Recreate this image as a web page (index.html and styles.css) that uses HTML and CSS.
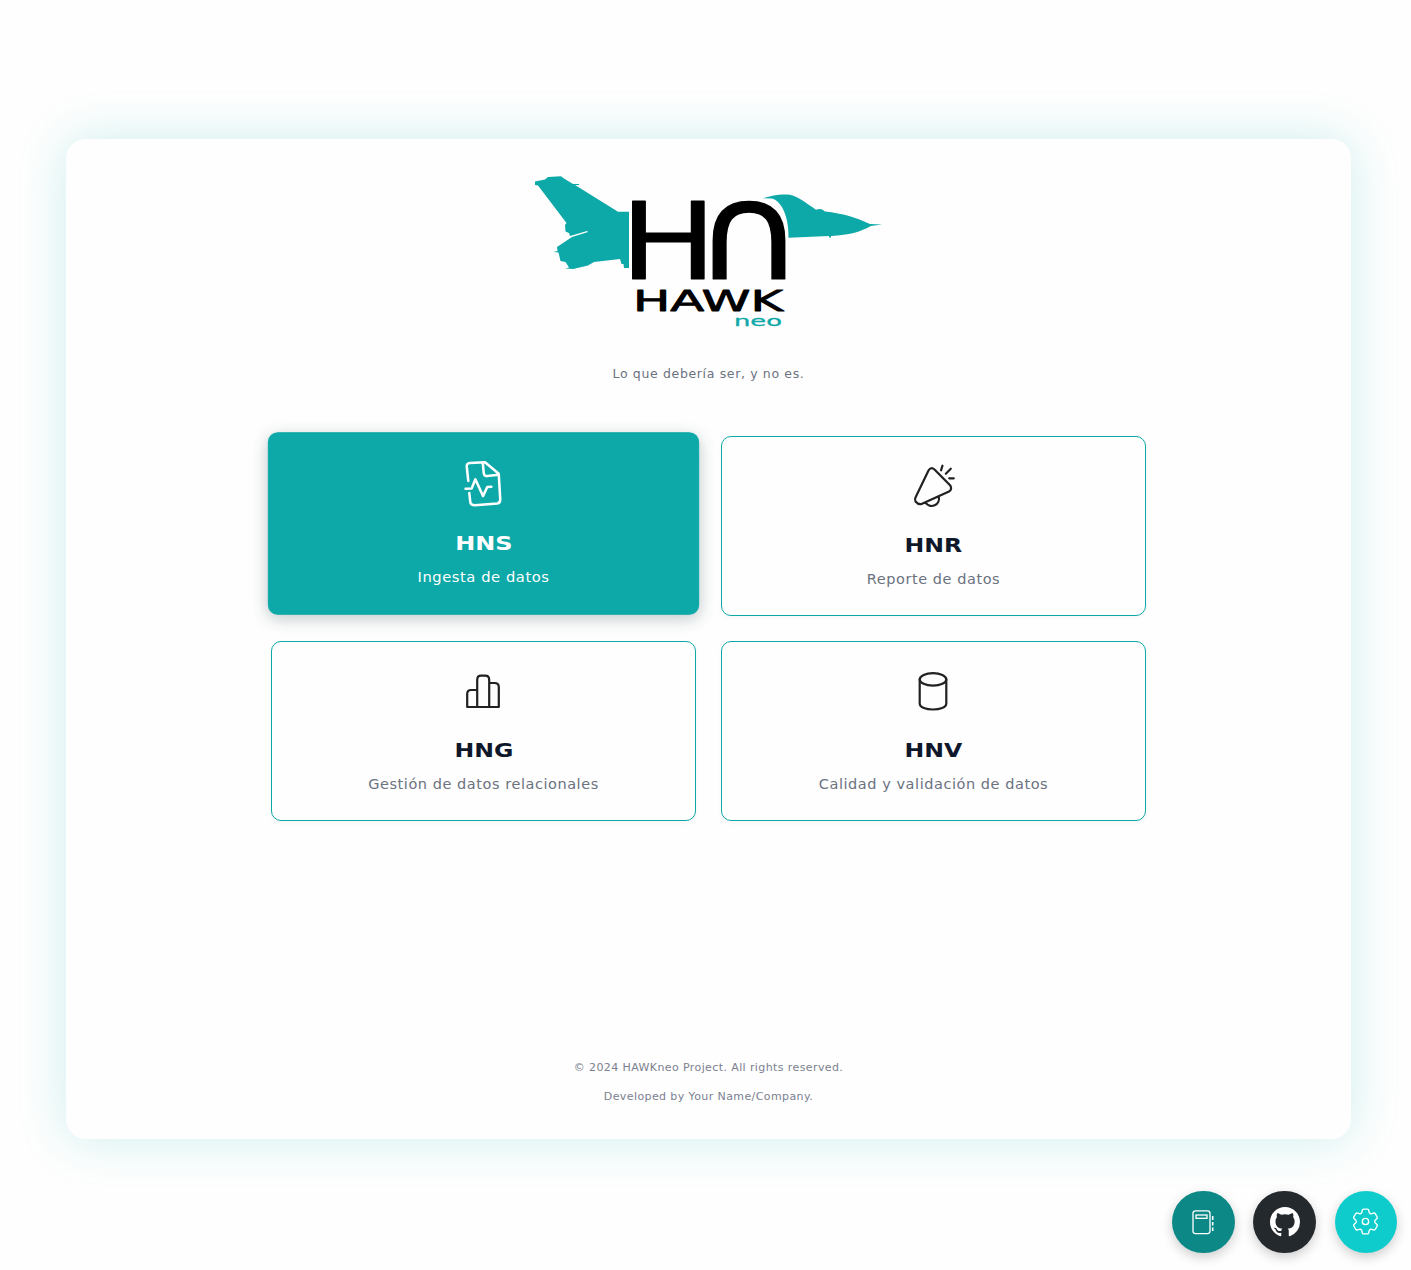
FILE: index.html
```html
<!DOCTYPE html>
<html lang="es">
<head>
<meta charset="utf-8">
<title>HAWKneo</title>
<link rel="stylesheet" href="styles.css">
</head>
<body>
<main class="panel">
  <svg class="logo" viewBox="525 165 367 170" role="img" aria-label="HAWK neo">
    <g fill="#0da8a8">
      <path d="M535 181.5 545 179.500 548 177 561 176.300 564 178.500 573 184 579 184 579 185 575 185 618 211.700H629V268H624L623.500 264H621.500L620 259 594 262 588 265.500 573 269 565 268.500 569 267.500 565.500 262 560.500 261 558.500 252.500 553.500 252 557.500 251 557 247 572 237 588 232 587 231 570 236 569 233 565.500 231.500 565 225 566.500 223 538 185.500 535 185Z"/>
      <path d="M763 198.200C773 195 781 193.700 790 194.800C799 197 808 204.500 816 209.700C819 208.500 822 208.500 825 211.500C843 213.500 856 217.500 870 224L882 224.500 871 226C859 232.500 850 234.500 831 236V237.500H829V236L788.500 237.700C789 222 784 202 772 198.500Z"/>
    </g>
    <text class="mark" transform="translate(620 279) scale(1.190 .985)">H</text>
    <text class="mark" transform="translate(694 279) scale(1.400 1.240)">∩</text>
    <text class="word" x="633" y="311" textLength="150" lengthAdjust="spacingAndGlyphs">HAWK</text>
    <text class="neo" x="734" y="325.500" textLength="48" lengthAdjust="spacingAndGlyphs">neo</text>
  </svg>
  <p class="tagline"><span>Lo que debería ser, y no es.</span></p>
  <nav class="modules">
    <a class="module active">
      <svg class="icon" viewBox="0 0 48 48"><path d="M9.500 21 8 7Q7.500 4 11 3.500L26 2.700 39.500 14 41 39Q41 43 38 43.300L16 45Q12 45 11.500 42L10.500 33M23.800 3 24.700 13Q25 16.500 28 16.300L39.500 15M6.800 28.800 12.800 28.500 16.500 19.500 24 36 28.200 27 32.200 26.800"/></svg>
      <h2>HNS</h2><p>Ingesta de datos</p>
    </a>
    <a class="module">
      <svg class="icon" viewBox="0 0 48 48"><path d="M19.500 8.500Q22 4.500 25.500 7.500L41.300 23.500Q43.500 27.500 40 29.500L12.500 42Q9.500 43 6.500 39.500 5.500 37.500 6.500 35.500ZM16.500 40.700A7.400 7.400 0 0 0 29.800 34.700M33.500 3.700 32 8.300M41.800 6.700 36.800 11.700M40.200 16.300H44.800"/></svg>
      <h2>HNR</h2><p>Reporte de datos</p>
    </a>
    <a class="module">
      <svg class="icon" viewBox="0 0 48 48"><path d="M18.200 40H8.200V27Q8.200 23 12 23H18.200M18.200 40V13Q18.200 8.700 22 8.700H26.200Q30.200 8.700 30.200 13V40M30.200 16H35.500Q39.800 16 39.800 20V40H18.200"/></svg>
      <h2>HNG</h2><p>Gestión de datos relacionales</p>
    </a>
    <a class="module">
      <svg class="icon" viewBox="0 0 48 48"><ellipse cx="24" cy="12.400" rx="13.300" ry="6.300"/><path d="M10.700 12.400V36.500C10.700 44.500 37.300 44.500 37.300 36.500V12.400"/></svg>
      <h2>HNV</h2><p>Calidad y validación de datos</p>
    </a>
  </nav>
  <footer class="footer">
    <p>© 2024 HAWKneo Project. All rights reserved.</p>
    <p>Developed by Your Name/Company.</p>
  </footer>
</main>
<div class="actions">
  <a class="action docs" aria-label="Docs"><svg width="28" height="28" viewBox="0 0 28 28" fill="none" stroke="#fff" stroke-width="1.300"><rect x="4" y="2.800" width="17" height="22.800" rx="2.500"/><rect x="7" y="7" width="11" height="3.300"/><path stroke-width="1.600" d="M23.700 8V12M23.700 14V17.500M23.700 19.500V23"/></svg></a>
  <a class="action github" aria-label="GitHub"><svg width="30" height="30" viewBox="0 0 16 16" fill="#fff"><path d="M8 0C3.580 0 0 3.580 0 8c0 3.540 2.290 6.530 5.470 7.590.4.070.55-.17.55-.38 0-.19-.01-.82-.01-1.490-2.010.37-2.530-.49-2.690-.94-.09-.23-.48-.94-.82-1.130-.28-.15-.68-.52-.01-.53.630-.01 1.080.58 1.230.82.720 1.210 1.870.87 2.330.66.070-.52.280-.87.510-1.070-1.780-.2-3.640-.89-3.640-3.950 0-.87.310-1.590.82-2.150-.08-.2-.36-1.020.08-2.120 0 0 .67-.21 2.200.82.640-.18 1.320-.27 2-.27s1.360.09 2 .27c1.530-1.040 2.200-.82 2.200-.82.440 1.100.16 1.920.08 2.120.510.56.82 1.270.82 2.150 0 3.070-1.870 3.750-3.650 3.950.290.250.54.73.54 1.480 0 1.070-.01 1.930-.01 2.200 0 .21.150.46.55.38A8.010 8.010 0 0 0 16 8c0-4.420-3.580-8-8-8Z"/></svg></a>
  <a class="action settings" aria-label="Settings"><svg width="33" height="33" viewBox="0 0 24 24" fill="none" stroke="#fff" stroke-width="1"><path d="M9.594 3.940c.09-.542.56-.94 1.110-.94h2.593c.55 0 1.020.398 1.110.94l.213 1.281c.063.374.313.686.645.87.074.04.147.083.22.127.325.196.72.257 1.075.124l1.217-.456a1.125 1.125 0 0 1 1.370.49l1.296 2.247a1.125 1.125 0 0 1-.26 1.431l-1.003.827c-.293.241-.438.613-.43.992a7.723 7.723 0 0 1 0 .255c-.008.378.137.75.43.991l1.004.827c.424.35.534.955.26 1.430l-1.298 2.247a1.125 1.125 0 0 1-1.369.491l-1.217-.456c-.355-.133-.75-.072-1.076.124a6.470 6.470 0 0 1-.22.128c-.331.183-.581.495-.644.869l-.213 1.281c-.09.543-.56.94-1.110.94h-2.594c-.55 0-1.019-.398-1.110-.94l-.213-1.281c-.062-.374-.312-.686-.644-.87a6.520 6.520 0 0 1-.22-.127c-.325-.196-.72-.257-1.076-.124l-1.217.456a1.125 1.125 0 0 1-1.369-.49l-1.297-2.247a1.125 1.125 0 0 1 .26-1.431l1.004-.827c.292-.24.437-.613.43-.991a6.932 6.932 0 0 1 0-.255c.007-.38-.138-.751-.43-.992l-1.004-.827a1.125 1.125 0 0 1-.26-1.430l1.297-2.247a1.125 1.125 0 0 1 1.370-.491l1.216.456c.356.133.751.072 1.076-.124.072-.044.146-.086.22-.128.332-.183.582-.495.644-.869l.214-1.280Z"/><circle cx="12" cy="12" r="2.300"/></svg></a>
</div>
</body>
</html>
```
FILE: styles.css
```css
* { box-sizing: border-box; }
body {
  margin: 0;
  min-height: 1270px;
  padding: 139px 60px 0 66px;
  background: #fefefe;
  font-family: "DejaVu Sans", sans-serif;
}
h2, p { margin: 0; }
.panel {
  display: flex;
  flex-direction: column;
  align-items: center;
  height: 1000px;
  padding: 26px 0 35px;
  border-radius: 20px;
  background: #fefefe;
  box-shadow: 0 0 50px rgba(13, 168, 168, .2);
}
.logo { width: 367px; height: 170px; flex: none; }
.mark { font: 108px "DejaVu Sans", sans-serif; stroke: #000; stroke-width: 1; stroke-linejoin: round; }
.word { font: 28px "DejaVu Sans", sans-serif; stroke: #000; stroke-width: .8; stroke-linejoin: round; }
.neo { font: 14px "DejaVu Sans", sans-serif; fill: #0da8a8; stroke: #0da8a8; stroke-width: .3; }
.tagline { margin-top: 29px; font-size: 12.500px; line-height: 20px; letter-spacing: .65px; color: #6b7280; }
.modules {
  display: grid;
  grid-template-columns: repeat(2, 425px);
  grid-auto-rows: 180px;
  gap: 25px;
  margin-top: 52px;
}
.module {
  display: flex;
  flex-direction: column;
  align-items: center;
  padding-top: 25px;
  border: 1px solid #0da8a8;
  border-radius: 10px;
  background: #fefefe;
  box-shadow: 0 2px 5px rgba(0, 0, 0, .03);
  color: #0f172a;
}
.icon { width: 48px; height: 48px; margin-right: 1px; fill: none; stroke: #212121; stroke-width: 2.200; stroke-linecap: round; stroke-linejoin: round; }
.module h2 { margin-top: 20px; font-size: 20px; line-height: 30px; transform: scaleX(1.18); }
.module p { margin-top: 7px; font-size: 14.500px; line-height: 24px; letter-spacing: .55px; color: #6b7280; }
.active {
  transform: translateY(-2.500px) scale(1.015);
  background: #0da8a8;
  color: #fff;
  box-shadow: 0 4px 16px rgba(0, 40, 40, .24);
}
.active .icon { position: relative; top: 1px; stroke: #fff; stroke-width: 2.500; }
.active p { color: #fff; }
.footer { margin-top: auto; text-align: center; font-size: 11px; line-height: 15px; letter-spacing: .4px; color: #7b8190; }
.footer p + p { margin-top: 14px; }
.actions { position: fixed; right: 14px; bottom: 17px; display: flex; gap: 18.700px; }
.action {
  display: grid;
  place-items: center;
  width: 62.500px;
  height: 62.500px;
  border-radius: 50%;
  box-shadow: 0 4px 12px rgba(0, 0, 0, .2);
}
.docs { background: #0c8986; }
.github { background: #24292e; }
.settings { background: #0fcccc; }
```
